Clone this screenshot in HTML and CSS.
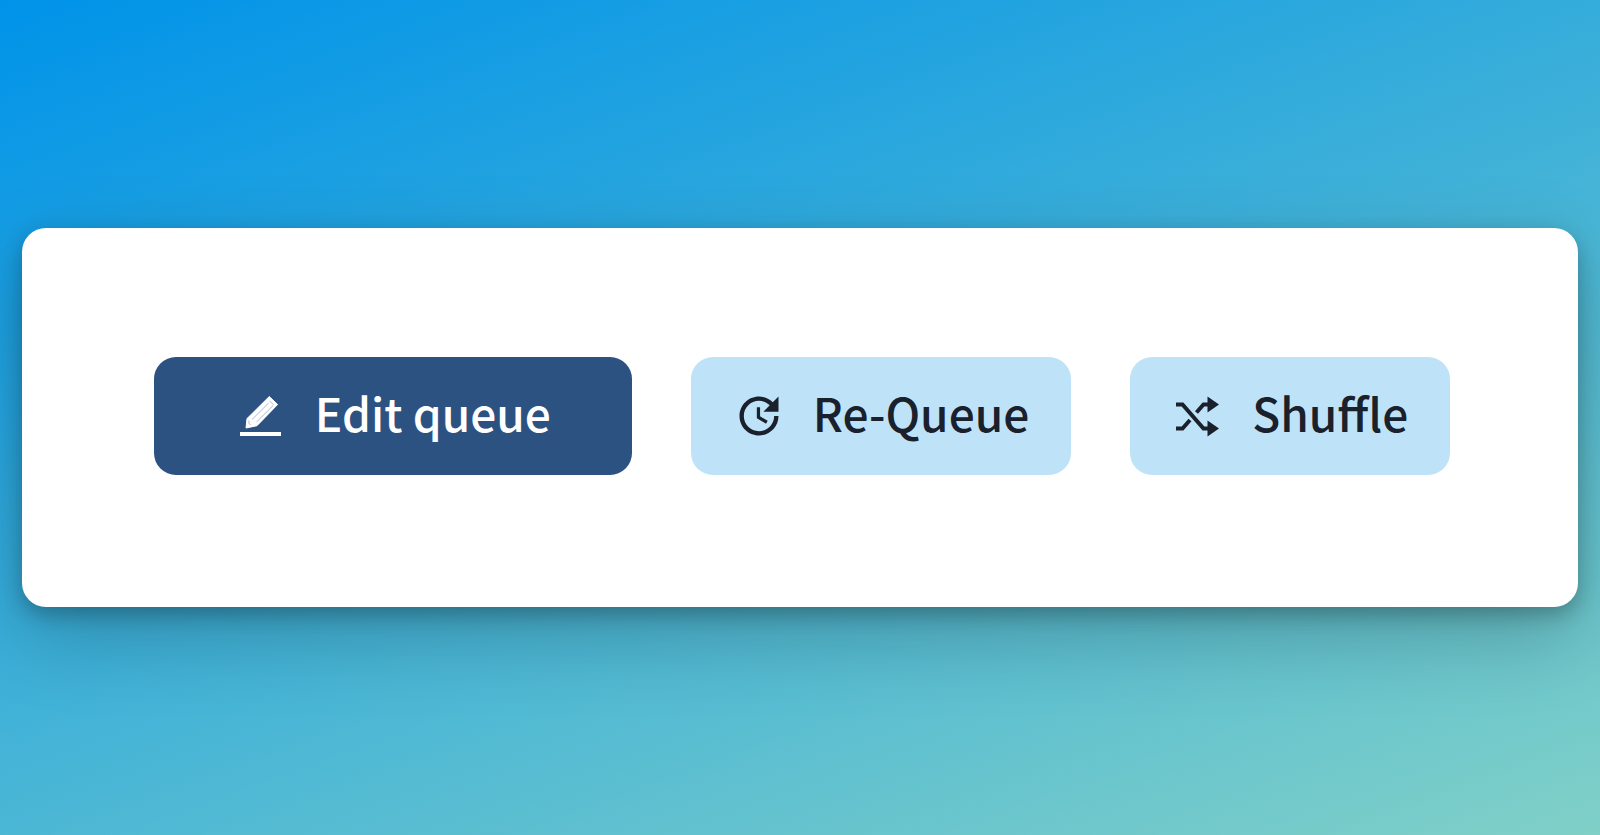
FILE: index.html
```
<!DOCTYPE html>
<html lang="en">
<head>
<meta charset="utf-8">
<meta name="viewport" content="width=device-width, initial-scale=1">
<title>Queue actions</title>
<link rel="stylesheet" href="styles.css">
</head>
<body>
<main class="card">
  <button class="button button-primary" type="button">
    <svg class="icon" viewBox="0 0 52 52" aria-hidden="true">
      <path fill="currentColor" stroke="currentColor" stroke-linejoin="round" d="M34.300 6.500 42.600 14.500 22 35.700 11 38 12 28.600z"/>
      <path fill="none" stroke="#a9bbd6" stroke-width="1" d="M17 29.500 33.500 13.200M21.500 32 38 15.700M34.500 10.800l4 4M14 30.500v3l1.500 1.500"/>
      <path fill="currentColor" d="M5 42h41v4H5z"/>
    </svg>
    <span class="label">Edit queue</span>
  </button>
  <button class="button" type="button">
    <svg class="icon" viewBox="0 0 24 24" aria-hidden="true">
      <path fill="currentColor" d="M11 8v5l4.250 2.520.77-1.280-3.520-2.090V8H11zm10 2V3l-2.640 2.640C16.740 4.010 14.490 3 12 3c-4.970 0-9 4.030-9 9s4.030 9 9 9 9-4.030 9-9h-2c0 3.860-3.140 7-7 7s-7-3.140-7-7 3.140-7 7-7c1.930 0 3.680.79 4.950 2.050L14 10h7z"/>
    </svg>
    <span class="label">Re-Queue</span>
  </button>
  <button class="button" type="button">
    <svg class="icon" viewBox="0 0 52 52" aria-hidden="true">
      <path fill="none" stroke="currentColor" stroke-width="4" d="M4 14.500h6.500L31.500 38.500H37M4 38.500h6.500l7.500-8.500M24.500 22.500l7-8H37"/>
      <path fill="currentColor" d="M35.500 6.500 47 14.500 35.500 22.500zM35.500 30.500 47 38.500 35.500 46.500z"/>
    </svg>
    <span class="label">Shuffle</span>
  </button>
</main>
</body>
</html>
```
FILE: styles.css
```
* {
  box-sizing: border-box;
}

body {
  margin: 0;
  min-height: 100vh;
  padding: 22px;
  display: flex;
  align-items: center;
  background: linear-gradient(160deg, #0093e9 0%, #80d0c7 100%);
  font-family: "Noto Sans CJK SC", "Noto Sans", sans-serif;
}

.card {
  flex: 1;
  display: flex;
  justify-content: center;
  gap: 59px;
  padding: 129px 20px 132px 24px;
  border-radius: 24px;
  background: #fff;
  box-shadow: 0 28px 80px rgba(0, 0, 0, 0.22), 0 8px 20px rgba(0, 0, 0, 0.24);
}

.button {
  display: flex;
  align-items: center;
  justify-content: center;
  gap: 28px;
  height: 118px;
  padding: 0 42px;
  border: 0;
  border-radius: 22px;
  background: #bee3f8;
  color: #1a202c;
  font-family: inherit;
  font-size: 46px;
  font-weight: 500;
  white-space: nowrap;
  cursor: pointer;
}

.button-primary {
  padding: 0 81px;
  background: #2c5282;
  color: #fff;
}

.icon {
  flex: none;
  width: 52px;
  height: 52px;
}

.label {
  padding-bottom: 8px;
}
```
